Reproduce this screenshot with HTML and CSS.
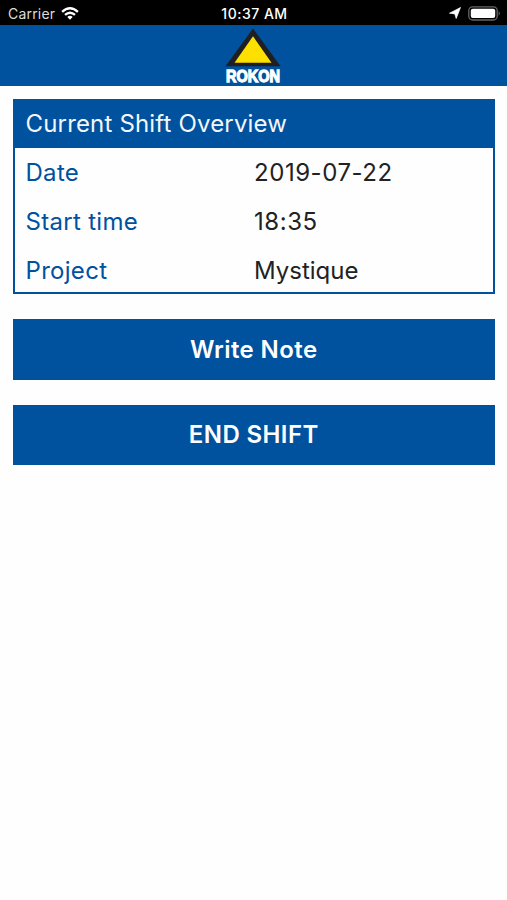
FILE: index.html
```
<!DOCTYPE html>
<html lang="en">
<head>
    <meta charset="UTF-8">
    <meta name="viewport" content="width=device-width, initial-scale=1.0">
    <title>Rokon</title>
    <link rel="stylesheet" href="styles.css">
</head>
<body>
    <div class="status">
        <div class="carrier">
            <span>Carrier</span>
            <svg class="wifi" width="18" height="13" viewBox="0 0 18 13">
                <g fill="none" stroke="#fff" stroke-width="2.3">
                    <path d="M1.1 4.9Q9 -2.3 16.9 4.9"/>
                    <path d="M4 7.9Q9 3.5 14 7.9"/>
                </g>
                <path d="M6.3 9.9Q9 7.7 11.7 9.9L9 12.7Z" fill="#fff"/>
            </svg>
        </div>
        <div class="clock">10:37 AM</div>
        <div class="indicators">
            <svg width="12" height="12" viewBox="0 0 12 12">
                <path d="M11.5 .5L7.2 11.5L5.8 6.9L.5 6.2Z" fill="#fff" stroke="#fff" stroke-width=".7" stroke-linejoin="round"/>
            </svg>
            <svg width="33" height="15" viewBox="0 0 33 15">
                <rect x=".8" y=".8" width="28.4" height="13.2" rx="3.8" fill="none" stroke="#666" stroke-width="1.3"/>
                <rect x="2.8" y="2.8" width="24.4" height="9.2" rx="2" fill="#fff"/>
                <path d="M30.7 5Q32.7 7.4 30.7 9.8Z" fill="#777"/>
            </svg>
        </div>
    </div>

    <header class="navbar">
        <svg class="logo" width="70" height="61" viewBox="0 0 70 61">
            <path d="M35 3.5L62.5 41.2H7.5Z" fill="#1f1f23"/>
            <path d="M35 11.3L53.5 37.7H16.5Z" fill="#fee000"/>
            <text class="logo-text" x="8" y="57" textLength="54" lengthAdjust="spacingAndGlyphs">ROKON</text>
        </svg>
    </header>

    <main>
        <section class="overview">
            <h1>Current Shift Overview</h1>
            <dl>
                <dt>Date</dt>
                <dd class="num">2019-07-22</dd>
                <dt>Start time</dt>
                <dd class="num">18:35</dd>
                <dt>Project</dt>
                <dd>Mystique</dd>
            </dl>
        </section>
        <button class="btn">Write Note</button>
        <button class="btn">END SHIFT</button>
    </main>
</body>
</html>
```
FILE: styles.css
```
* {
    box-sizing: border-box;
}
body {
    margin: 0;
    background: #fefefe;
    font-family: Inter, "Liberation Sans", sans-serif;
    color: #222;
}
.status {
    display: grid;
    grid-template-columns: 1fr auto 1fr;
    align-items: center;
    height: 25px;
    padding: 1px 6px 0 8px;
    background: #000;
    color: #fff;
    font-size: 14px;
}
.carrier {
    display: flex;
    align-items: center;
    gap: 6px;
    color: #ddd;
    letter-spacing: .2px;
}
.clock {
    font-weight: 500;
    letter-spacing: .5px;
}
.indicators {
    display: flex;
    align-items: center;
    justify-content: flex-end;
    gap: 7px;
}
.navbar {
    display: flex;
    justify-content: center;
    height: 61px;
    padding-right: 1px;
    background: #00519e;
}
.logo-text {
    font: bold 17px/1 "Liberation Sans", Arial, sans-serif;
    fill: #fff;
    stroke: #fff;
    stroke-width: 1.3px;
}
main {
    display: flex;
    flex-direction: column;
    padding: 12.5px 12.5px 0 13px;
}
.overview {
    height: 195.5px;
    border: 2px solid #00519e;
}
h1 {
    height: 47px;
    margin: 0;
    padding-left: 10.5px;
    background: #00519e;
    color: #f2f7fc;
    font-size: 24px;
    font-weight: 400;
    line-height: 46px;
    letter-spacing: .17px;
}
dl {
    display: grid;
    grid-template-columns: 228.5px 1fr;
    margin: 0;
    padding: .5px 0 0 10.5px;
    font-size: 24px;
    line-height: 49px;
}
dt {
    color: #00519e;
    letter-spacing: .3px;
}
dd {
    margin: 0;
}
.num {
    letter-spacing: .55px;
}
.btn {
    height: 60.5px;
    margin-top: 25px;
    padding: 0;
    border: 0;
    background: #00519e;
    color: #fff;
    font-family: inherit;
    font-size: 24px;
    font-weight: 600;
    letter-spacing: .4px;
}
```
